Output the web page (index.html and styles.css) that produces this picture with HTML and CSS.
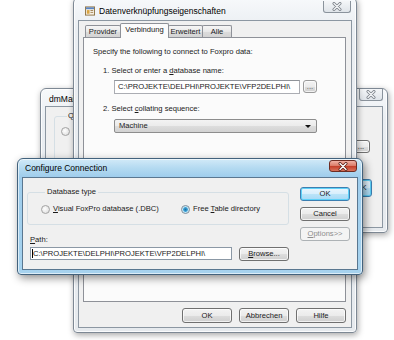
FILE: index.html
```html
<!DOCTYPE html>
<html>
<head>
    <meta charset="UTF-8">
    <title>Configure Connection</title>
    <link rel="stylesheet" href="styles.css">
</head>
<body>
<div class="desktop">

    <!-- window behind everything -->
    <div class="win inactive win-dm">
        <div class="titlebar">
            <span class="title">dmMain</span>
            <span class="close-btn">
                <svg viewBox="0 0 12 9"><path d="M3 1.5L9 7.5M9 1.5L3 7.5" class="x-out"/><path d="M3 1.5L9 7.5M9 1.5L3 7.5" class="x-in"/></svg>
            </span>
        </div>
        <div class="client dm-client">
            <fieldset class="dm-group">
                <legend>Query type</legend>
                <div class="radio-item"><span class="radio"></span><span>DBC</span></div>
            </fieldset>
            <div class="dm-side">
                <span class="btn dm-dots">...</span>
                <span class="btn default dm-ok">OK</span>
            </div>
        </div>
    </div>

    <!-- Datenverknüpfungseigenschaften -->
    <div class="win inactive win-props">
        <div class="titlebar">
            <svg class="app-icon" viewBox="0 0 11 10">
                <rect x="0.5" y="0.5" width="10" height="9" fill="#f6f0e4" stroke="#8b6f3e"/>
                <rect x="1" y="1" width="9" height="2" fill="#5a86c4"/>
                <rect x="2" y="4" width="3" height="4" fill="#d9a441"/>
                <rect x="6" y="4" width="3" height="1" fill="#a08050"/>
                <rect x="6" y="6" width="3" height="1" fill="#a08050"/>
            </svg>
            <span class="title">Datenverknüpfungseigenschaften</span>
            <span class="close-btn">
                <svg viewBox="0 0 12 9"><path d="M3 1.5L9 7.5M9 1.5L3 7.5" class="x-out"/><path d="M3 1.5L9 7.5M9 1.5L3 7.5" class="x-in"/></svg>
            </span>
        </div>
        <div class="client props-client">
            <div class="tabs">
                <span class="tab tab-provider">Provider</span>
                <span class="tab tab-verbindung selected">Verbindung</span>
                <span class="tab tab-erweitert">Erweitert</span>
                <span class="tab tab-alle">Alle</span>
            </div>
            <div class="tab-panel">
                <p class="intro">Specify the following to connect to Foxpro data:</p>
                <p class="step">1. Select or enter a <u>d</u>atabase name:</p>
                <div class="field-row">
                    <div class="textbox db-name">C:\PROJEKTE\DELPHI\PROJEKTE\VFP2DELPHI\</div>
                    <span class="btn btn-dots">...</span>
                </div>
                <p class="step">2. Select <u>c</u>ollating sequence:</p>
                <div class="combo">
                    <span>Machine</span>
                    <span class="combo-arrow"></span>
                </div>
            </div>
            <div class="btn-row">
                <span class="btn">OK</span>
                <span class="btn">Abbrechen</span>
                <span class="btn">Hilfe</span>
            </div>
        </div>
    </div>

    <!-- active dialog -->
    <div class="win active win-conn">
        <div class="titlebar">
            <span class="title">Configure Connection</span>
            <span class="close-btn">
                <svg viewBox="0 0 12 9"><path d="M3 1.5L9 7.5M9 1.5L3 7.5" class="x-out"/><path d="M3 1.5L9 7.5M9 1.5L3 7.5" class="x-in"/></svg>
            </span>
        </div>
        <div class="client conn-client">
            <div class="conn-main">
                <fieldset class="group">
                    <legend>Database type</legend>
                    <div class="radio-row">
                        <div class="radio-item first"><span class="radio"></span><span><u>V</u>isual FoxPro database (.DBC)</span></div>
                        <div class="radio-item"><span class="radio checked"></span><span>Free <u>T</u>able directory</span></div>
                    </div>
                </fieldset>
                <p class="path-label"><u>P</u>ath:</p>
                <div class="path-row">
                    <div class="textbox path-box"><span class="caret"></span>C:\PROJEKTE\DELPHI\PROJEKTE\VFP2DELPHI\</div>
                    <span class="btn browse"><u>B</u>rowse...</span>
                </div>
            </div>
            <div class="conn-buttons">
                <span class="btn default">OK</span>
                <span class="btn">Cancel</span>
                <span class="btn disabled"><u>O</u>ptions&gt;&gt;</span>
            </div>
        </div>
    </div>

</div>
</body>
</html>
```

FILE: styles.css
```css
* {
    box-sizing: border-box;
    margin: 0;
    padding: 0;
}

body {
    font-family: 'Liberation Sans', Arial, sans-serif;
    font-size: 7.6px;
    line-height: 10px;
    color: #1a1a1a;
    background: #fff;
}

u {
    text-decoration-thickness: 1px;
    text-underline-offset: 1px;
}

.desktop {
    position: relative;
    width: 394px;
    height: 340px;
    overflow: hidden;
    background: #fff;
}

/* window frames */
.win {
    position: absolute;
    display: flex;
    flex-direction: column;
    border: 1px solid;
    border-radius: 6px 6px 4px 4px;
    padding: 0 4px 4px;
}

.win.inactive {
    background: linear-gradient(#f7f9fb, #eaeef2 30px, #e6eaee);
    border-color: #7d8894;
    box-shadow: 1px 2px 6px rgba(0, 0, 0, 0.35), inset 0 0 0 1px rgba(255, 255, 255, 0.8);
}

.win.active {
    background: linear-gradient(#d2eaf8, #b4daf1 9px, #9fcdec 18px, #a6d2ee);
    border-color: #42627d;
    box-shadow: 2px 3px 8px rgba(0, 0, 0, 0.45), inset 0 0 0 1px rgba(255, 255, 255, 0.6);
}

.win-dm {
    left: 40px;
    top: 88px;
    width: 348px;
    height: 145px;
}

.win-props {
    left: 73px;
    top: -3px;
    width: 284px;
    height: 336px;
}

.win-conn {
    left: 17px;
    top: 158px;
    width: 346px;
    height: 117px;
}

.titlebar {
    display: flex;
    align-items: center;
    flex-shrink: 0;
}

.win-props .titlebar {
    height: 22px;
    padding: 3px 0 0 3px;
}

.win-conn .titlebar {
    height: 18px;
    padding: 0 0 0 3px;
}

.win-dm .titlebar {
    height: 17px;
    padding: 2px 0 0 4px;
}

.title {
    font-size: 8.5px;
    color: #000;
}

.app-icon {
    width: 10px;
    height: 10px;
    margin: 0 4px 0 4px;
}

.close-btn {
    align-self: flex-start;
    margin-left: auto;
    margin-right: 1px;
    width: 28px;
    height: 12px;
    border: 1px solid #8a939c;
    border-top: none;
    border-radius: 0 0 3px 3px;
    background: linear-gradient(#f4f6f8, #dfe4e9);
    display: flex;
    align-items: center;
    justify-content: center;
}

.close-btn svg {
    width: 12px;
    height: 9px;
}

.x-out {
    fill: none;
    stroke: #7a8088;
    stroke-width: 3;
    stroke-linecap: round;
}

.x-in {
    fill: none;
    stroke: #f2f4f6;
    stroke-width: 1.4;
    stroke-linecap: round;
}

.win-conn .close-btn {
    margin-top: 1px;
    margin-right: 1px;
    border: 1px solid #6e2c22;
    border-radius: 3px;
    background: linear-gradient(#f0b1a4, #dc7f6c 45%, #c5412c 55%, #d8735c);
}

.win-conn .x-out {
    stroke: #5a2018;
}

.win-conn .x-in {
    stroke: #fff;
}

.win-dm .close-btn {
    width: 24px;
    margin-top: -2px;
    margin-right: 0;
}

.client {
    flex: 1;
    background: #f0f0f0;
    border: 1px solid #8c97a2;
}

.win-conn .client {
    border-color: #5a7790;
}

/* tabs */
.props-client {
    display: flex;
    flex-direction: column;
    padding: 2px 5px 0 4px;
}

.tabs {
    display: flex;
    align-items: flex-end;
    height: 14px;
    padding-left: 2px;
    position: relative;
    z-index: 1;
}

.tab {
    height: 12px;
    border: 1px solid #8e9198;
    border-bottom: none;
    border-radius: 2px 2px 0 0;
    background: linear-gradient(#f6f6f6, #e8e8e8 50%, #dcdcdc 51%, #d4d4d4);
    text-align: center;
    line-height: 11px;
    margin-right: -1px;
}

.tab.selected {
    height: 15px;
    margin-bottom: -1px;
    background: #fbfbfb;
    line-height: 12px;
}

.tab-provider { width: 36px; }
.tab-verbindung { width: 49px; }
.tab-erweitert { width: 35px; }
.tab-alle { width: 30px; }

.tab-panel {
    height: 265px;
    border: 1px solid #8e9198;
    background: #fbfbfb;
    padding: 9px 0 0 9px;
}

.intro {
    margin-bottom: 9px;
}

.step {
    padding-left: 10px;
}

.field-row {
    display: flex;
    gap: 3px;
    margin: 4px 0 10px 21px;
}

.textbox {
    height: 14px;
    border: 1px solid #abadb3;
    border-top-color: #8f9399;
    background: #fff;
    padding-left: 3px;
    line-height: 12px;
    white-space: nowrap;
    overflow: hidden;
}

.db-name {
    width: 186px;
}

.combo {
    display: flex;
    align-items: center;
    justify-content: space-between;
    width: 203px;
    height: 14px;
    margin: 5px 0 0 21px;
    padding: 0 5px 0 4px;
    border: 1px solid #8d8d8d;
    border-radius: 2px;
    background: linear-gradient(#f3f3f3, #ebebeb 50%, #dddddd 51%, #d2d2d2);
}

.combo-arrow {
    width: 0;
    height: 0;
    border-left: 3px solid transparent;
    border-right: 3px solid transparent;
    border-top: 3px solid #111;
}

/* buttons */
.btn {
    display: flex;
    align-items: center;
    justify-content: center;
    height: 14px;
    width: 50px;
    border: 1px solid #707070;
    border-radius: 3px;
    background: linear-gradient(#f3f3f3, #ebebeb 50%, #dddddd 51%, #cfcfcf);
    box-shadow: inset 0 0 0 1px rgba(255, 255, 255, 0.7);
    white-space: nowrap;
}

.btn.default {
    border-color: #3c7fb1;
    background: linear-gradient(#ebf6fd, #d7eefc 50%, #bbe4f9 51%, #a7d9f5);
    box-shadow: inset 0 0 0 1px #5ed1f8;
}

.btn.disabled {
    border-color: #adb2b5;
    background: #f4f4f4;
    color: #8d8d8d;
    box-shadow: none;
}

.btn-dots {
    width: 14px;
    height: 13px;
    border-color: #9a9a9a;
    color: #555;
}

.btn-row {
    display: flex;
    justify-content: flex-end;
    gap: 7px;
    margin-top: 6px;
    padding-right: 0;
}

.btn-row .btn {
    height: 15px;
}

/* configure connection */
.conn-client {
    display: grid;
    grid-template-columns: 262px 50px;
    column-gap: 11px;
    padding: 9px 0 0 4px;
}

.group {
    border: 1px solid #d5dfe5;
    border-radius: 3px;
    padding: 7px 0 10px 13px;
}

.group legend {
    margin-left: 4px;
    padding: 0 2px;
    line-height: 10px;
}

.radio-row {
    display: flex;
}

.radio-item {
    display: flex;
    align-items: center;
    gap: 3px;
    height: 10px;
}

.radio-item.first {
    width: 140px;
}

.radio {
    width: 9px;
    height: 9px;
    border-radius: 50%;
    border: 1px solid #a3a3a3;
    background: radial-gradient(circle at 40% 40%, #ffffff, #e4e4e4 70%, #d0d0d0);
    flex-shrink: 0;
}

.radio.checked {
    border-color: #7a8e9c;
    background: radial-gradient(circle, #1c6fa4 0, #3fa4d8 2px, #b6dff3 2.6px, #eef5f8 4px);
}

.path-label {
    margin: 10px 0 2px 3px;
}

.path-row {
    display: flex;
    gap: 7px;
    padding-left: 3px;
}

.path-box {
    width: 202px;
    height: 13px;
    border-color: #8b98a5;
    padding-left: 1px;
    line-height: 11px;
    display: flex;
    align-items: center;
}

.caret {
    width: 1px;
    height: 9px;
    background: #000;
}

.browse {
    width: 50px;
}

.conn-buttons {
    display: flex;
    flex-direction: column;
    gap: 6px;
}

/* dmMain, mostly hidden */
.dm-client {
    display: flex;
    justify-content: space-between;
    padding: 4px 4px 0 8px;
}

.dm-group {
    width: 290px;
    height: 60px;
    border: 1px solid #d5dfe5;
    border-radius: 3px;
    padding: 5px 0 0 6px;
}

.dm-group legend {
    margin-left: 6px;
    padding: 0 1px;
}

.dm-side {
    display: flex;
    flex-direction: column;
    align-items: flex-end;
    gap: 26px;
    padding-top: 29px;
}

.dm-dots {
    width: 18px;
    height: 13px;
    margin-right: 8px;
}

.dm-ok {
    width: 22px;
    height: 18px;
    margin-right: 6px;
}
```
